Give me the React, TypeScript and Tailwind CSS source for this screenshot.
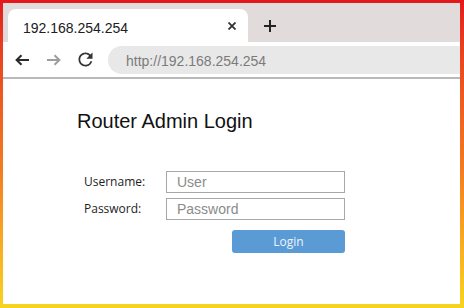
import { useState } from "react";

function BackArrow({ color }: { color: string }) {
  return (
    <svg width="14" height="12" viewBox="0 0 14 12" fill="none" stroke={color} strokeWidth="2" strokeLinecap="square">
      <path d="M13 6H2" />
      <path d="M6.5 1.2L1.6 6l4.9 4.8" strokeLinecap="butt" />
    </svg>
  );
}

function ReloadIcon() {
  return (
    <svg width="21" height="21" viewBox="0 0 24 24" fill="#333">
      <path d="M17.65 6.35A7.958 7.958 0 0 0 12 4c-4.42 0-7.99 3.58-7.99 8s3.57 8 7.99 8c3.73 0 6.84-2.55 7.73-6h-2.08A5.99 5.99 0 0 1 12 18c-3.31 0-6-2.69-6-6s2.69-6 6-6c1.66 0 3.14.69 4.22 1.78L13 11h7V4l-2.35 2.35z" />
    </svg>
  );
}

export default function App() {
  const [user, setUser] = useState("");
  const [pass, setPass] = useState("");

  return (
    <div className="h-[308px] w-[464px] bg-linear-to-b from-[#e3161d] via-[#f47b20] via-55% to-[#f6d41e] pt-[3px] pr-[4px] pb-[4px] pl-[3px]">
      <div className="flex h-full flex-col bg-white font-['Liberation_Sans',Arial,sans-serif]">
        {/* tab strip */}
        <div className="flex h-[39px] items-end bg-[#e1dcdb] pl-[5px]">
          <div className="flex h-[33px] w-[240px] items-center rounded-t-[8px] bg-white pt-[4px] pl-[15px] pr-[12px]">
            <span className="flex-1 text-[14px] leading-4 text-[#202020]">192.168.254.254</span>
            <svg width="8" height="8" viewBox="0 0 8 8" stroke="#333" strokeWidth="1.8" className="mb-[3px]">
              <path d="M0.5 0.5l7 7M7.5 0.5l-7 7" />
            </svg>
          </div>
          <div className="flex h-[33px] items-center pl-[16px] pt-[1px]">
            <svg width="12" height="12" viewBox="0 0 12 12" stroke="#222" strokeWidth="2">
              <path d="M6 0v12M0 6h12" />
            </svg>
          </div>
        </div>

        {/* toolbar */}
        <div className="flex h-[37px] items-start border-b-2 border-[#b9b9b9] pt-[4px]">
          <div className="flex h-[28px] items-center pl-[12px]">
            <BackArrow color="#2a2a2a" />
            <div className="ml-[18px] -scale-x-100">
              <BackArrow color="#9e9e9e" />
            </div>
            <div className="ml-[14px] mt-[-1px]">
              <ReloadIcon />
            </div>
          </div>
          <div className="ml-[12px] flex h-[28px] flex-1 items-center rounded-l-full bg-[#e8e8e8] pl-[18px] pt-[1px]">
            <span className="text-[14px] leading-4 text-[#7b7b7b]">http://192.168.254.254</span>
          </div>
        </div>

        {/* page content */}
        <div className="flex flex-col pl-[74px]">
          <h1 className="mt-[31px] text-[20px] leading-[23px] text-[#111]">Router Admin Login</h1>

          <div className="mt-[38px] flex flex-col gap-[5px] pl-[7px]">
            <div className="flex h-[22px] items-center">
              <label className="w-[82px] font-['Open_Sans',sans-serif] text-[12px] leading-[22px] text-[#1d1d1d]">Username:</label>
              <input
                value={user}
                onChange={(e) => setUser(e.target.value)}
                placeholder="User"
                className="h-[22px] w-[179px] border border-[#a8a8a8] bg-white pl-[10px] text-[14px] leading-5 text-[#333] outline-none placeholder:text-[#8b8b8b]"
              />
            </div>
            <div className="flex h-[22px] items-center">
              <label className="w-[82px] font-['Open_Sans',sans-serif] text-[12px] leading-[22px] text-[#1d1d1d]">Password:</label>
              <input
                type="password"
                value={pass}
                onChange={(e) => setPass(e.target.value)}
                placeholder="Password"
                className="h-[22px] w-[179px] border border-[#a8a8a8] bg-white pl-[10px] text-[14px] leading-5 text-[#333] outline-none placeholder:text-[#8b8b8b]"
              />
            </div>
            <div className="mt-[5px] flex pl-[148px]">
              <button className="h-[23px] w-[113px] rounded-[3px] bg-[#5b9bd5] font-['Open_Sans',sans-serif] text-[12px] leading-[23px] text-[#eef4fb]">
                Login
              </button>
            </div>
          </div>
        </div>
      </div>
    </div>
  );
}
